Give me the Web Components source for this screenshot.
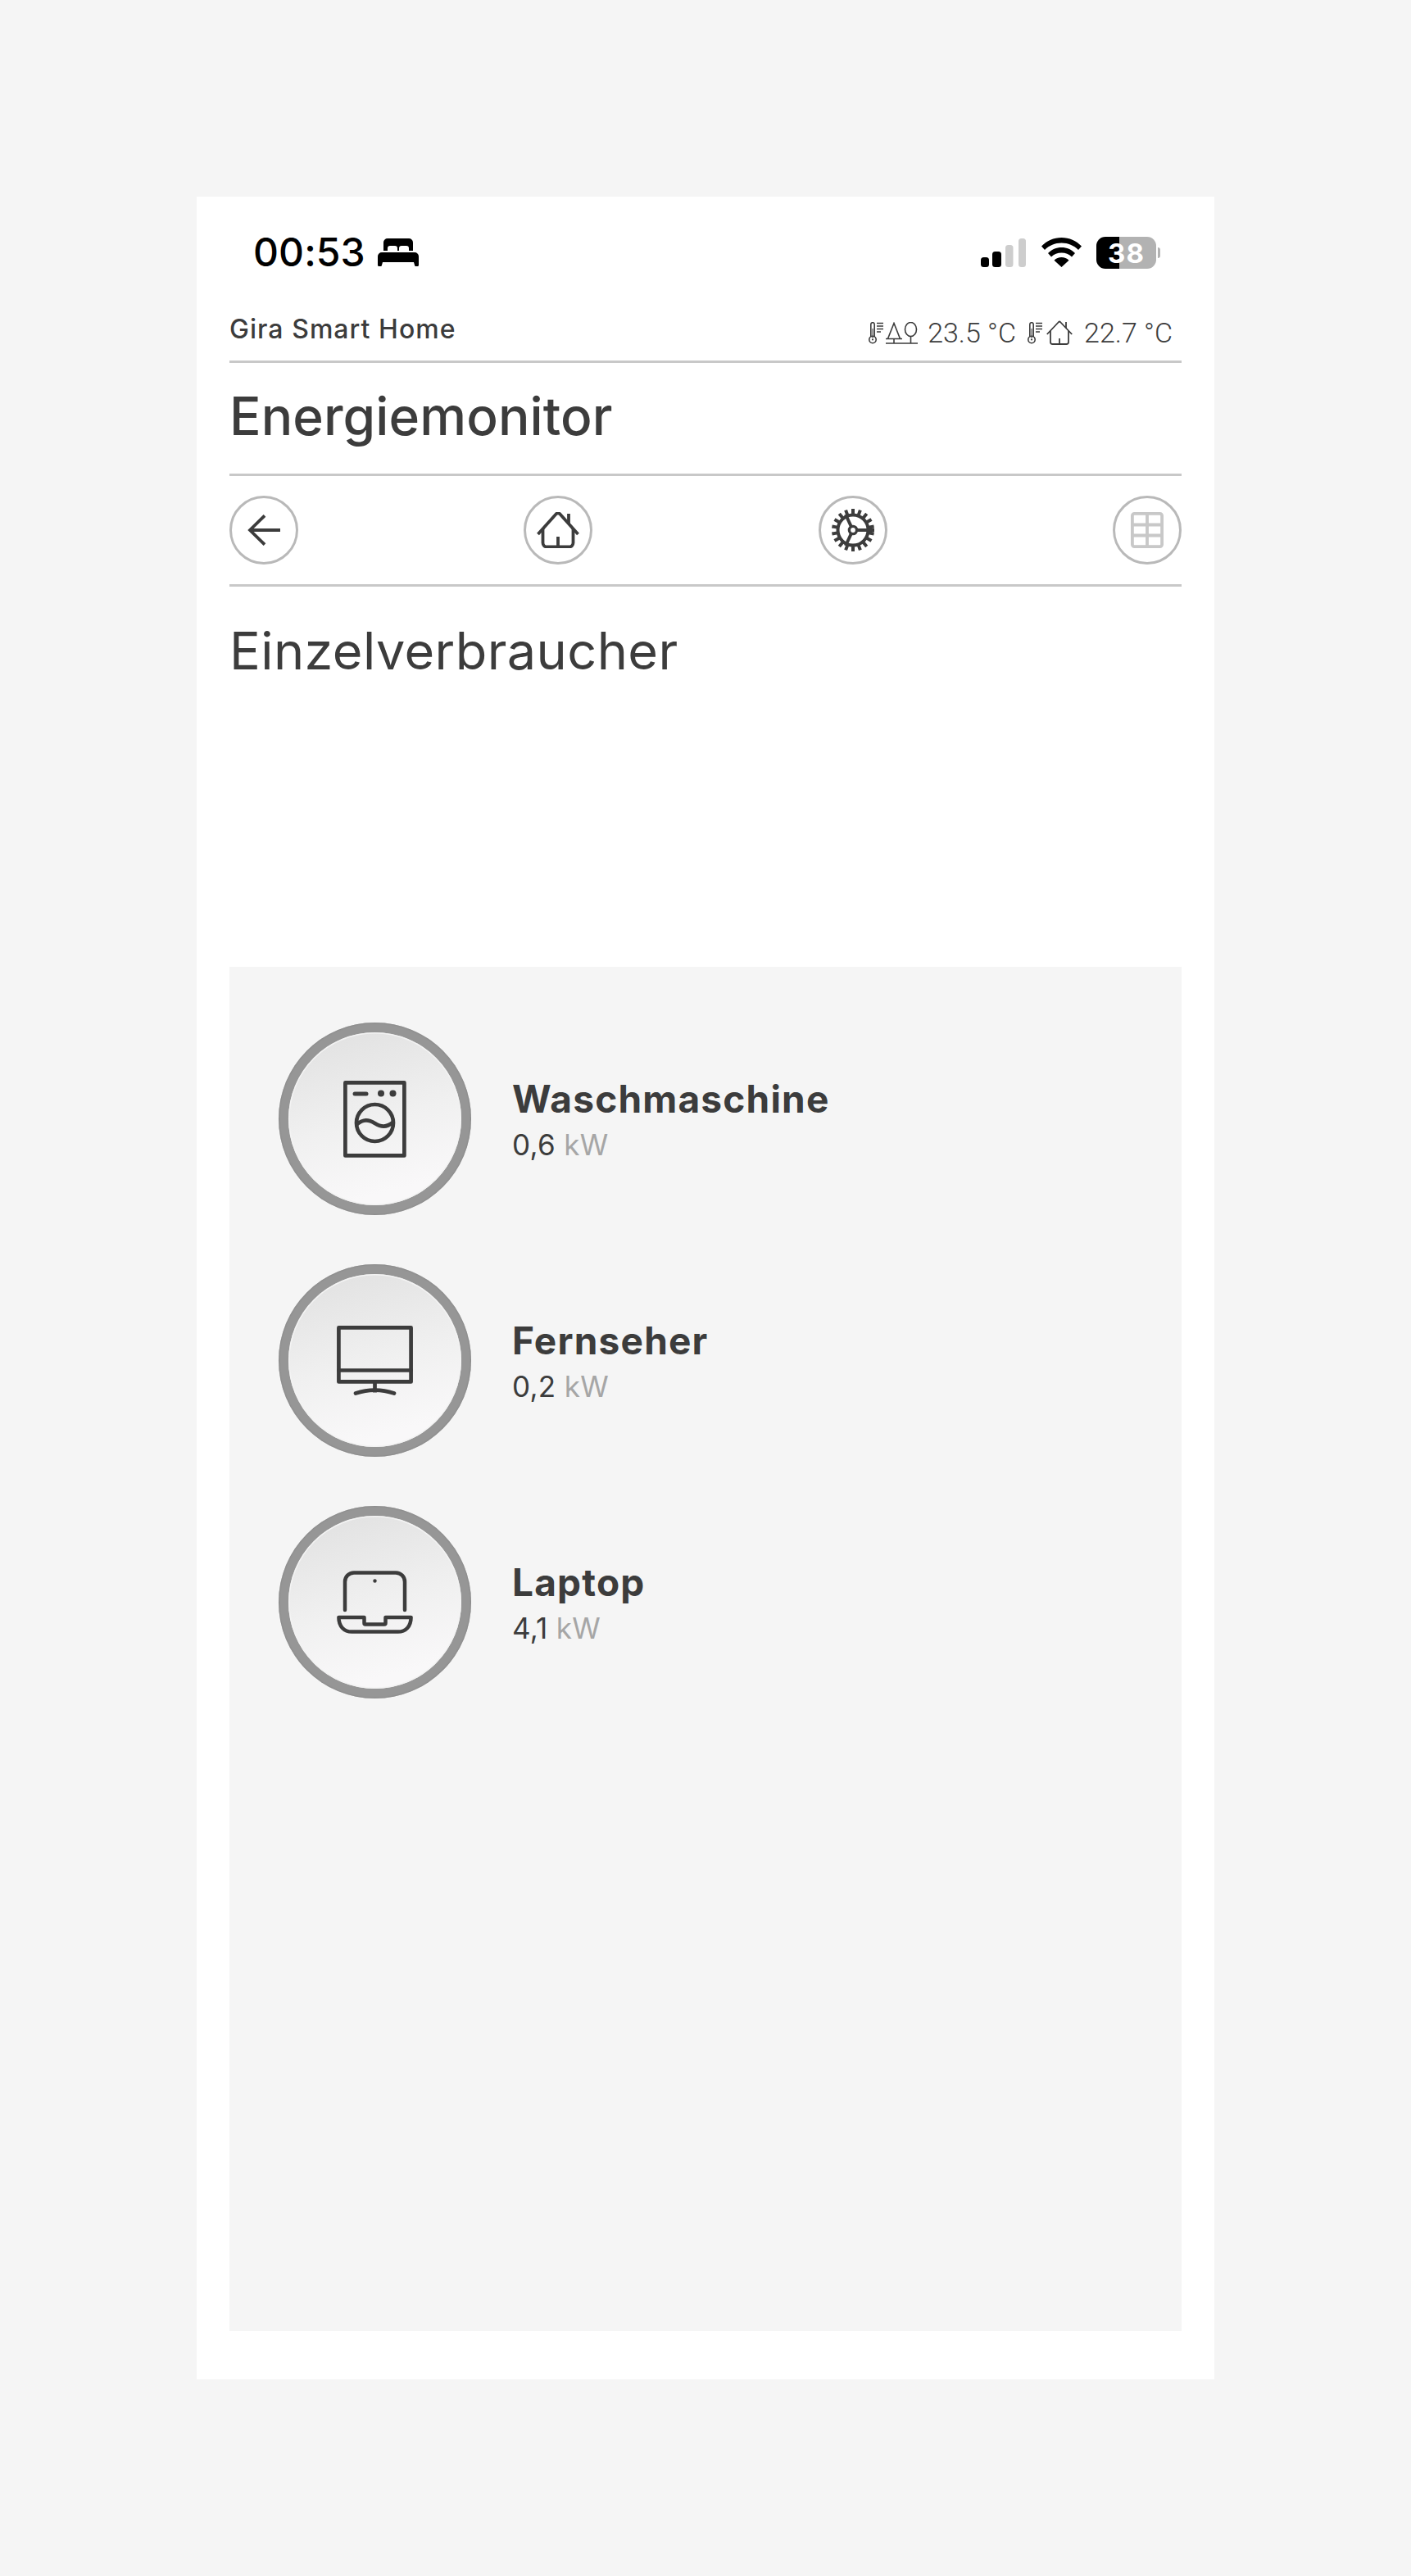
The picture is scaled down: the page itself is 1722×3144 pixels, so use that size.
<!DOCTYPE html>
<html lang="de"><head><meta charset="utf-8"><title>Energiemonitor</title>
<style>
html,body{margin:0;padding:0;background:#f5f5f5}
body{font-family:Inter,"Liberation Sans",sans-serif;color:#3c3c3c}
</style></head><body>
<gira-page>
<status-bar slot="top"></status-bar>
<app-header></app-header>
<nav-bar></nav-bar>
<h-section></h-section>
<device-row name="Waschmaschine" value="0,6" icon="washer"></device-row>
<device-row name="Fernseher" value="0,2" icon="tv"></device-row>
<device-row name="Laptop" value="4,1" icon="laptop"></device-row>
</gira-page>
<script>
const S='#3c3c3c';
const therm=`<svg class="th" width="18" height="27" viewBox="0 0 18 27" fill="none" stroke="${S}" stroke-width="1.600"><circle cx="5" cy="21.500" r="4.200"/><path d="M2.800 18.200V2.900a2.200 2.200 0 0 1 4.400 0v15.300"/><circle cx="5" cy="21.500" r="1.100" fill="${S}" stroke="none"/><path d="M5 8v12" stroke-width="1"/><path d="M10 1.500h8M10 5h8M10 8.500h8M10 12h5" stroke-width="1.700"/></svg>`;
const ICONS={
washer:`<svg width="77" height="94" viewBox="0 0 77 94" fill="none" stroke="${S}" stroke-width="4.700" stroke-linejoin="round" stroke-linecap="round"><rect x="2.400" y="2.400" width="72" height="89"/><path d="M14 16h14" stroke-width="5"/><circle cx="46" cy="15.500" r="4" fill="${S}" stroke="none"/><circle cx="60.500" cy="15.500" r="4" fill="${S}" stroke="none"/><circle cx="38.500" cy="51.500" r="22.500"/><path d="M16.500 53c8-6 14-6 22-1s14 5 22-1"/></svg>`,
tv:`<svg width="93" height="85" viewBox="0 0 93 85" fill="none" stroke="${S}" stroke-width="4.700" stroke-linejoin="round" stroke-linecap="round"><rect x="2.400" y="2.400" width="88.200" height="66"/><path d="M2.400 54.500h88.200"/><path d="M46.500 69v12.500" stroke-linecap="butt"/><path d="M23 82.500c15-5 32-5 47 0"/></svg>`,
laptop:`<svg width="93" height="77" viewBox="0 0 93 77" fill="none" stroke="${S}" stroke-width="4.500" stroke-linejoin="round" stroke-linecap="round"><path d="M10 48V13.500A11 11 0 0 1 21 2.400h51a11 11 0 0 1 11 11V48"/><circle cx="46.500" cy="12.500" r="2.200" fill="${S}" stroke="none"/><path d="M2.400 57h31.100v7a1.500 1.500 0 0 0 1.500 1.500h23a1.500 1.500 0 0 0 1.500-1.500v-7h31.100c0 11-6.500 17.600-16 17.600H18.400C9 74.600 2.400 68 2.400 57z"/></svg>`,
back:`<svg width="40" height="38" viewBox="0 0 40 38" fill="none" stroke="${S}" stroke-width="3.800"><path d="M21 1.300 3 19l18 17.700M3 19h37"/></svg>`,
home:`<svg width="52" height="44" viewBox="0 0 52 44" fill="none" stroke="${S}" stroke-width="3.800" stroke-linejoin="round"><path d="M1.500 27 23.500 2.500a3.300 3.300 0 0 1 5 0L50.500 27"/><path d="M39 15V2"/><path d="M7.500 20v17.500a5 5 0 0 0 5 5h27a5 5 0 0 0 5-5V20"/><path d="M26 42.500V30"/></svg>`,
gear:`<svg width="52" height="52" viewBox="0 0 52 52" fill="none" stroke="${S}" stroke-width="4"><circle cx="26" cy="26" r="18.500"/><circle cx="26" cy="26" r="4.600" stroke-width="3.400"/><path d="M30.500 26H52M24 22l-7-15M24 30l-7 15"/><g stroke-width="4">${Array.from({length:18},(_,i)=>`<path d="M26 0v8" transform="rotate(${i*20} 26 26)"/>`).join('')}</g></svg>`,
grid:`<svg width="40" height="44" viewBox="0 0 40 44" fill="none" stroke="#c8c8c8" stroke-width="3.800"><rect x="1.900" y="1.900" width="36.200" height="40.200" rx="2.500"/><path d="M20 2v40M2 15.500h36M2 28.500h36"/></svg>`
};

class GiraPage extends HTMLElement{
  constructor(){super();this.attachShadow({mode:'open'}).innerHTML=`<style>
  :host{display:block;box-sizing:border-box;width:1722px;height:3144px;padding:240px 240px 0}
  .card{background:#fff;width:1242px;height:2664px;box-sizing:border-box;padding:0 40px;display:flex;flex-direction:column}
  .panel{background:#f5f5f5;height:1665px;margin-top:auto;margin-bottom:59px;padding:68px 60px;box-sizing:border-box;display:flex;flex-direction:column;gap:60px}
  </style><div class="card"><slot name="top"></slot><slot name="head"></slot><div class="panel"><slot></slot></div></div>`}
  connectedCallback(){[...this.children].forEach(c=>{if(!c.matches('device-row')&&!c.slot)c.slot='head'})}
}
class StatusBar extends HTMLElement{
  constructor(){super();this.attachShadow({mode:'open'}).innerHTML=`<style>
  :host{display:flex;align-items:center;justify-content:space-between;height:136px;padding:0 25px 0 29px;box-sizing:border-box;color:#000}
  .l,.r{display:flex;align-items:center}
  .t{font:550 48px/1 Inter,sans-serif;letter-spacing:.1px;margin-right:15px}
  .sig{margin-right:19px}.wifi{margin-right:18px}
  </style><div class="l"><span class="t">00:53</span>
  <svg width="50" height="34" viewBox="0 0 50 34"><path d="M7 15V5a5 5 0 0 1 5-5h26a5 5 0 0 1 5 5v10h-5v-3a3 3 0 0 0-3-3H29a3 3 0 0 0-3 3v3h-2v-3a3 3 0 0 0-3-3H15a3 3 0 0 0-3 3v3zM0 22a5 5 0 0 1 5-5h40a5 5 0 0 1 5 5v10.500a1.500 1.500 0 0 1-1.500 1.500h-2A1.500 1.500 0 0 1 45 32.500L44 29H6l-1 3.500A1.500 1.500 0 0 1 3.500 34h-2A1.500 1.500 0 0 1 0 32.500z"/></svg></div>
  <div class="r">
  <svg class="sig" width="55" height="35" viewBox="0 0 55 35"><rect x="0" y="23" width="10" height="12" rx="3.500"/><rect x="14" y="16" width="11" height="19" rx="3.500"/><rect x="30" y="8" width="9.500" height="27" rx="3.500" fill="#cdcdcd"/><rect x="46" y="0" width="9" height="35" rx="3.500" fill="#cdcdcd"/></svg>
  <svg class="wifi" width="49" height="36" viewBox="0 0 49 36"><path d="M24.500 0C34 0 42.500 4 49 10.500l-4 4.500C39.500 9.500 32.500 6.500 24.500 6.500S9.500 9.500 4 15L0 10.500C6.500 4 15 0 24.500 0zM24.500 12c6.500 0 12 2.500 16.500 7l-4 4.500c-3.500-3.400-7.500-5-12.500-5s-9 1.600-12.500 5L8 19c4.500-4.500 10-7 16.500-7zM24.500 24c3.500 0 6.500 1.300 9 3.700L24.500 36l-9-8.300c2.500-2.400 5.500-3.700 9-3.700z"/></svg>
  <battery-pill></battery-pill></div>`}
}
class BatteryPill extends HTMLElement{
  constructor(){super();this.attachShadow({mode:'open'}).innerHTML=`<style>
  :host{display:block;position:relative;width:79px;height:39px}
  .b{position:absolute;left:0;top:0;width:73px;height:39px;border-radius:11px;background:linear-gradient(90deg,#000 0 28px,#b2b2b2 28px);color:#fff;font:700 33px/40px Inter,sans-serif;text-align:center;letter-spacing:1px}
  .n{position:absolute;left:75px;top:13px;width:3px;height:13px;background:#b2b2b2;border-radius:0 4px 4px 0}
  </style><div class="b">38</div><div class="n"></div>`}
}
class AppHeader extends HTMLElement{
  constructor(){super();this.attachShadow({mode:'open'}).innerHTML=`<style>
  :host{display:block;color:#3c3c3c}
  .a{display:flex;justify-content:space-between;align-items:flex-end;height:67px;box-sizing:border-box;border-bottom:3px solid #c8c8c8}
  .n{font:500 32px/38px Inter,sans-serif;letter-spacing:1.05px;padding-bottom:19px}
  .w{display:flex;align-items:center;font:300 34px/38px Roboto,sans-serif;padding-right:11px;padding-bottom:15px}
  .w svg{display:block}
  .b{height:138px;box-sizing:border-box;border-bottom:3px solid #c8c8c8;font:500 64px/130px Inter,sans-serif;letter-spacing:.1px}
  .th{margin-right:3px}
  .v1{margin:0 14px 0 12px}
  .v2{margin-left:14px}
  .house{margin-left:2px}
  </style><div class="a"><span class="n">Gira Smart Home</span><span class="w">
  ${therm}
  <svg width="39" height="27" viewBox="0 0 39 27" fill="none" stroke="${S}" stroke-width="1.600"><path d="M0 26h39M0 20.500h20M10 1.500 2.500 20.500h15zM10 20.500V26"/><ellipse cx="30.500" cy="9" rx="7" ry="8.500"/><path d="M30.500 17.500V26"/></svg>
  <span class="v1">23.5 °C</span>
  ${therm}
  <svg class="house" width="32" height="30" viewBox="0 0 32 30" fill="none" stroke="${S}" stroke-width="1.800" stroke-linejoin="round"><path d="M.8 17 15 2a1.500 1.500 0 0 1 2 0l14.200 15"/><path d="M24 9V2"/><path d="M5 13v13.500a2.500 2.500 0 0 0 2.500 2.500h17a2.500 2.500 0 0 0 2.500-2.500V13M16 29v-7"/></svg>
  <span class="v2">22.7 °C</span></span></div>
  <div class="b">Energiemonitor</div>`}
}
class NavBar extends HTMLElement{
  constructor(){super();const b=(k)=>`<nav-btn><span>${ICONS[k]}</span></nav-btn>`;this.attachShadow({mode:'open'}).innerHTML=`<style>
  :host{display:flex;justify-content:space-between;align-items:center;height:135px;box-sizing:border-box;border-bottom:3px solid #c8c8c8}
  </style>${b('back')}${b('home')}${b('gear')}${b('grid')}`}
}
class NavBtn extends HTMLElement{
  constructor(){super();this.attachShadow({mode:'open'}).innerHTML=`<style>
  :host{display:flex;width:84px;height:84px;box-sizing:border-box;border:3px solid #b9b9b9;border-radius:50%;align-items:center;justify-content:center}
  ::slotted(span){display:flex}
  </style><slot></slot>`}
}
class HSection extends HTMLElement{
  constructor(){super();this.attachShadow({mode:'open'}).innerHTML=`<style>
  :host{display:block;font:400 63px/78px Inter,sans-serif;letter-spacing:.4px;color:#3c3c3c;padding-top:39px}
  </style>Einzelverbraucher`}
}
class DeviceRow extends HTMLElement{
  constructor(){super();const n=this.getAttribute('name'),v=this.getAttribute('value'),i=ICONS[this.getAttribute('icon')];this.attachShadow({mode:'open'}).innerHTML=`<style>
  :host{display:flex;align-items:center;height:235px}
  .c{width:235px;height:235px;border-radius:50%;background:#969696;box-sizing:border-box;padding:12px;flex:none;box-shadow:inset 0 0 2px #777}
  .i{width:100%;height:100%;border-radius:50%;background:linear-gradient(165deg,#e0e0e0 0%,#f0f0f0 50%,#f9f8f9 85%);box-shadow:inset 0 0 0 1.500px #f3f3f3;display:flex;align-items:center;justify-content:center}
  .t{margin-left:50px;display:flex;flex-direction:column}
  .n{font:700 46px/58px Inter,sans-serif;letter-spacing:1.2px;color:#3c3c3c}
  .v{font:400 35px/46px Inter,sans-serif;letter-spacing:.3px;color:#3c3c3c;margin-top:4px}
  .u{color:#a6a6a6}
  </style><div class="c"><div class="i">${i}</div></div><div class="t"><span class="n">${n}</span><span class="v">${v} <span class="u">kW</span></span></div>`}
}
customElements.define('gira-page',GiraPage);
customElements.define('status-bar',StatusBar);
customElements.define('battery-pill',BatteryPill);
customElements.define('app-header',AppHeader);
customElements.define('nav-bar',NavBar);
customElements.define('nav-btn',NavBtn);
customElements.define('h-section',HSection);
customElements.define('device-row',DeviceRow);
</script></body></html>
